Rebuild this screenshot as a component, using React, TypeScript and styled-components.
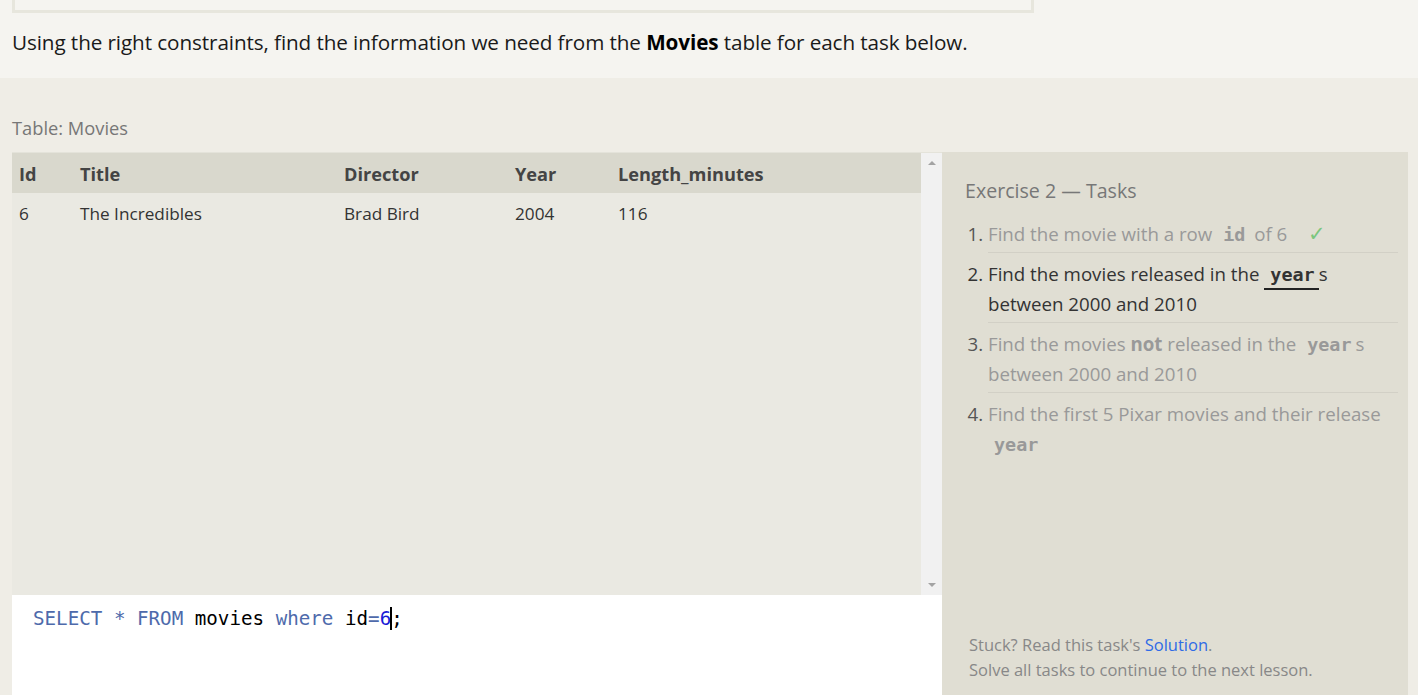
import React from "react";
import styled, { createGlobalStyle } from "styled-components";

const Global = createGlobalStyle`
  html, body { margin: 0; padding: 0; background: #efede6; }
  body { font-family: "Open Sans", "Noto Sans", sans-serif; overflow: hidden; }
  * { box-sizing: border-box; }
`;

const Page = styled.div`
  width: 1418px;
  height: 695px;
  overflow: hidden;
  display: flex;
  flex-direction: column;
`;

const Intro = styled.section`
  background: #f5f4f0;
  height: 78px;
  padding: 0 12px;
`;

const PrevBox = styled.div`
  width: 1022px;
  height: 13px;
  border: 3px solid #e7e6dd;
  border-top: none;
`;

const IntroText = styled.p`
  margin: 15px 0 0;
  font-size: 20.7px;
  color: #1a1a1a;
  letter-spacing: -0.1px;
  b { font-weight: 700; color: #000; }
`;

const Exercise = styled.section`
  flex: 1;
  padding: 37px 10px 0 12px;
  display: flex;
  flex-direction: column;
`;

const TableLabel = styled.div`
  font-size: 18.3px;
  color: #777;
  height: 37px;
`;

const Workspace = styled.div`
  flex: 1;
  display: flex;
  min-height: 0;
`;

const LeftCol = styled.div`
  width: 930px;
  display: flex;
  flex-direction: column;
`;

const TableWrap = styled.div`
  height: 443px;
  display: flex;
  background: #eae9e2;
  border-top: 1px solid #e4e3da;
`;

const TableArea = styled.div`
  flex: 1;
`;

const Table = styled.table`
  width: 100%;
  border-collapse: collapse;
`;

const Th = styled.th<{ $w?: number }>`
  background: #d9d8cd;
  height: 40px;
  text-align: left;
  font-size: 18.2px;
  font-weight: 700;
  color: #444;
  padding: 1px 0 0 7px;
  width: ${(p) => (p.$w ? `${p.$w}px` : "auto")};
`;

const Td = styled.td`
  height: 40px;
  font-size: 17.2px;
  color: #333;
  padding: 0 0 0 7px;
`;

const ScrollBar = styled.div`
  width: 21px;
  background: #f1f1f1;
  display: flex;
  flex-direction: column;
  justify-content: space-between;
  align-items: center;
  padding: 8px 0;
`;

const Arrow = styled.div<{ $down?: boolean }>`
  width: 0;
  height: 0;
  border-left: 4px solid transparent;
  border-right: 4px solid transparent;
  ${(p) =>
    p.$down
      ? "border-top: 4px solid #a3a3a3;"
      : "border-bottom: 4px solid #a3a3a3;"}
`;

const Editor = styled.div`
  flex: 1;
  background: #fff;
  padding: 12px 21px;
  font-family: "DejaVu Sans Mono", monospace;
  font-size: 19.2px;
  color: #000;
  white-space: pre;
`;

const Kw = styled.span`
  color: #4e6aab;
`;

const Num = styled.span`
  color: #1a1ad6;
`;

const Caret = styled.span`
  display: inline-block;
  width: 2px;
  height: 23px;
  background: #000;
  vertical-align: -5px;
  margin: 0 -1px;
`;

const TaskPanel = styled.aside`
  flex: 1;
  background: #e0ded3;
  padding: 25px 10px 13px 23px;
  display: flex;
  flex-direction: column;
`;

const TaskTitle = styled.h3`
  margin: 0 0 9px;
  font-size: 19.6px;
  font-weight: 400;
  color: #777;
`;

const TaskList = styled.ol`
  margin: 0;
  padding: 0 0 0 23px;
  flex: 1;
`;

const Task = styled.li<{ $active?: boolean; $last?: boolean }>`
  font-size: 18.7px;
  line-height: 30px;
  color: ${(p) => (p.$active ? "#333" : "#999")};
  padding: 6px 0 3px 0;
  border-bottom: ${(p) => (p.$last ? "none" : "1px solid #d2d0c6")};
  &::marker { color: ${(p) => (p.$active ? "#333" : "#555")}; }
  b { font-weight: 700; }
`;

const Code = styled.code<{ $underline?: boolean }>`
  font-family: "DejaVu Sans Mono", monospace;
  font-weight: 700;
  font-size: 18.4px;
  line-height: 1;
  padding: 0 4px 0 6px;
  ${(p) => (p.$underline ? "border-bottom: 2px solid #222; padding-bottom: 3px;" : "")}
`;

const Check = styled.span`
  color: #7bc67e;
  font-size: 21px;
  line-height: 1;
  margin-left: 16px;
`;

const Footer = styled.div`
  font-size: 16.5px;
  line-height: 25px;
  color: #888;
  padding-left: 4px;
  a { color: #2f6be6; text-decoration: none; }
`;

const columns = [
  { name: "Id", w: 61 },
  { name: "Title", w: 264 },
  { name: "Director", w: 171 },
  { name: "Year", w: 103 },
  { name: "Length_minutes" },
];

export default function App() {
  return (
    <Page>
      <Global />
      <Intro>
        <PrevBox />
        <IntroText>
          Using the right constraints, find the information we need from the <b>Movies</b> table for each task below.
        </IntroText>
      </Intro>
      <Exercise>
        <TableLabel>Table: Movies</TableLabel>
        <Workspace>
          <LeftCol>
            <TableWrap>
              <TableArea>
                <Table>
                  <thead>
                    <tr>
                      {columns.map((c) => (
                        <Th key={c.name} $w={c.w}>{c.name}</Th>
                      ))}
                    </tr>
                  </thead>
                  <tbody>
                    <tr>
                      <Td>6</Td>
                      <Td>The Incredibles</Td>
                      <Td>Brad Bird</Td>
                      <Td>2004</Td>
                      <Td>116</Td>
                    </tr>
                  </tbody>
                </Table>
              </TableArea>
              <ScrollBar>
                <Arrow />
                <Arrow $down />
              </ScrollBar>
            </TableWrap>
            <Editor>
              <Kw>SELECT</Kw> <Kw>*</Kw> <Kw>FROM</Kw> movies <Kw>where</Kw> id<Kw>=</Kw><Num>6</Num><Caret />;
            </Editor>
          </LeftCol>
          <TaskPanel>
            <TaskTitle>Exercise 2 — Tasks</TaskTitle>
            <TaskList>
              <Task>
                Find the movie with a row <Code>id</Code> of 6 <Check>✓</Check>
              </Task>
              <Task $active>
                Find the movies released in the <Code $underline>year</Code>s between 2000 and 2010
              </Task>
              <Task>
                Find the movies <b>not</b> released in the <Code>year</Code>s between 2000 and 2010
              </Task>
              <Task $last>
                Find the first 5 Pixar movies and their release <Code>year</Code>
              </Task>
            </TaskList>
            <Footer>
              Stuck? Read this task's <a href="#">Solution</a>.
              <br />
              Solve all tasks to continue to the next lesson.
            </Footer>
          </TaskPanel>
        </Workspace>
      </Exercise>
    </Page>
  );
}
